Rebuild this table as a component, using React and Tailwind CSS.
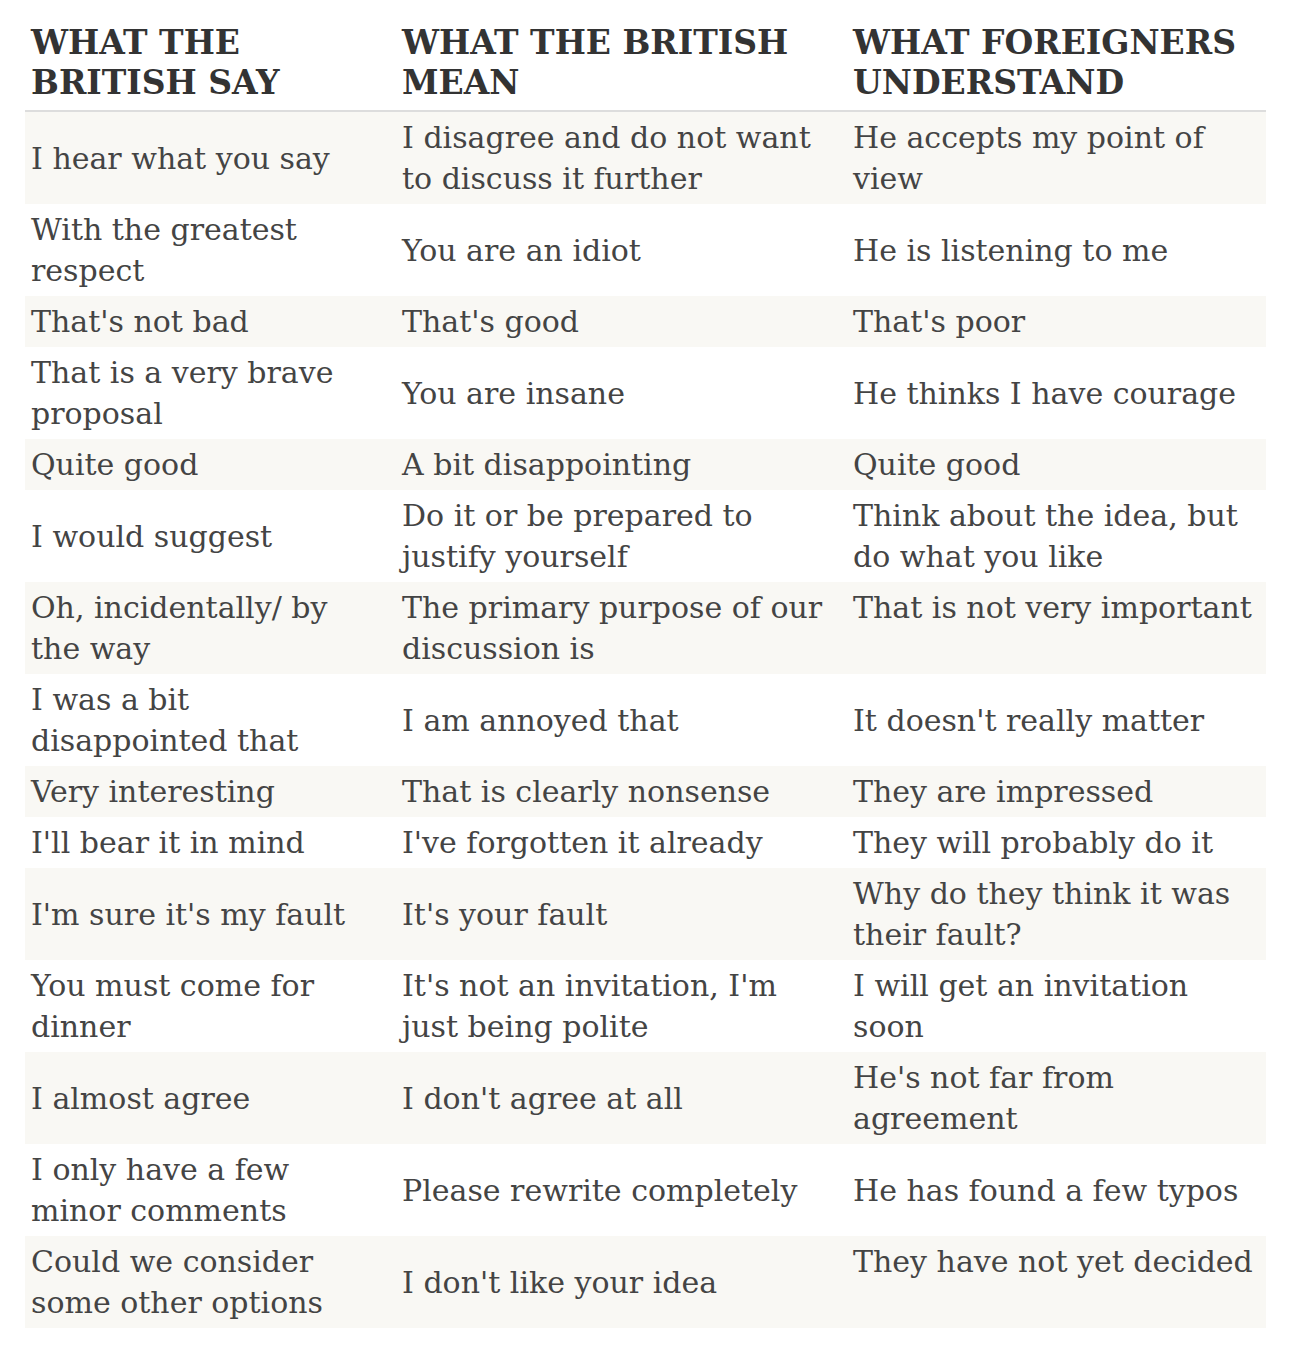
import React from 'react';

const rows = [
  [['I hear what you say'], ['I disagree and do not want', 'to discuss it further'], ['He accepts my point of', 'view']],
  [['With the greatest', 'respect'], ['You are an idiot'], ['He is listening to me']],
  [["That's not bad"], ["That's good"], ["That's poor"]],
  [['That is a very brave', 'proposal'], ['You are insane'], ['He thinks I have courage']],
  [['Quite good'], ['A bit disappointing'], ['Quite good']],
  [['I would suggest'], ['Do it or be prepared to', 'justify yourself'], ['Think about the idea, but', 'do what you like']],
  [['Oh, incidentally/ by', 'the way'], ['The primary purpose of our', 'discussion is'], ['That is not very important', '']],
  [['I was a bit', 'disappointed that'], ['I am annoyed that'], ["It doesn't really matter"]],
  [['Very interesting'], ['That is clearly nonsense'], ['They are impressed']],
  [["I'll bear it in mind"], ["I've forgotten it already"], ['They will probably do it']],
  [["I'm sure it's my fault"], ["It's your fault"], ['Why do they think it was', 'their fault?']],
  [['You must come for', 'dinner'], ["It's not an invitation, I'm", 'just being polite'], ['I will get an invitation', 'soon']],
  [['I almost agree'], ["I don't agree at all"], ["He's not far from", 'agreement']],
  [['I only have a few', 'minor comments'], ['Please rewrite completely'], ['He has found a few typos']],
  [['Could we consider', 'some other options'], ["I don't like your idea"], ['They have not yet decided', '']],
];

const Cell = ({ lines }) => (
  <div className="px-[6px] py-[5px] whitespace-nowrap">
    {lines.map((l, i) => (
      <div key={i} className="h-[41px]">{l}</div>
    ))}
  </div>
);

export default function App() {
  return (
    <div className="min-h-screen bg-white pt-[23px] pl-[25px] font-['DejaVu_Serif',serif]">
      <div className="w-[1241px]">
        {/* header */}
        <div className="grid grid-cols-[371px_451px_419px] border-b-2 border-[#dddddd] pb-[7px] text-[33px] font-bold uppercase leading-[40px] text-[#333333] whitespace-nowrap">
          <div className="px-[6px]">What the<br />British say</div>
          <div className="px-[6px]">What the British<br />mean</div>
          <div className="px-[6px]">What foreigners<br />understand</div>
        </div>

        {rows.map((row, i) => (
          <div
            key={i}
            className={`grid grid-cols-[371px_451px_419px] items-center text-[30px] leading-[41px] text-[#444444] ${i % 2 === 0 ? 'bg-[#f9f8f4]' : 'bg-white'}`}
          >
            {row.map((lines, j) => (
              <Cell key={j} lines={lines} />
            ))}
          </div>
        ))}
      </div>
    </div>
  );
}
